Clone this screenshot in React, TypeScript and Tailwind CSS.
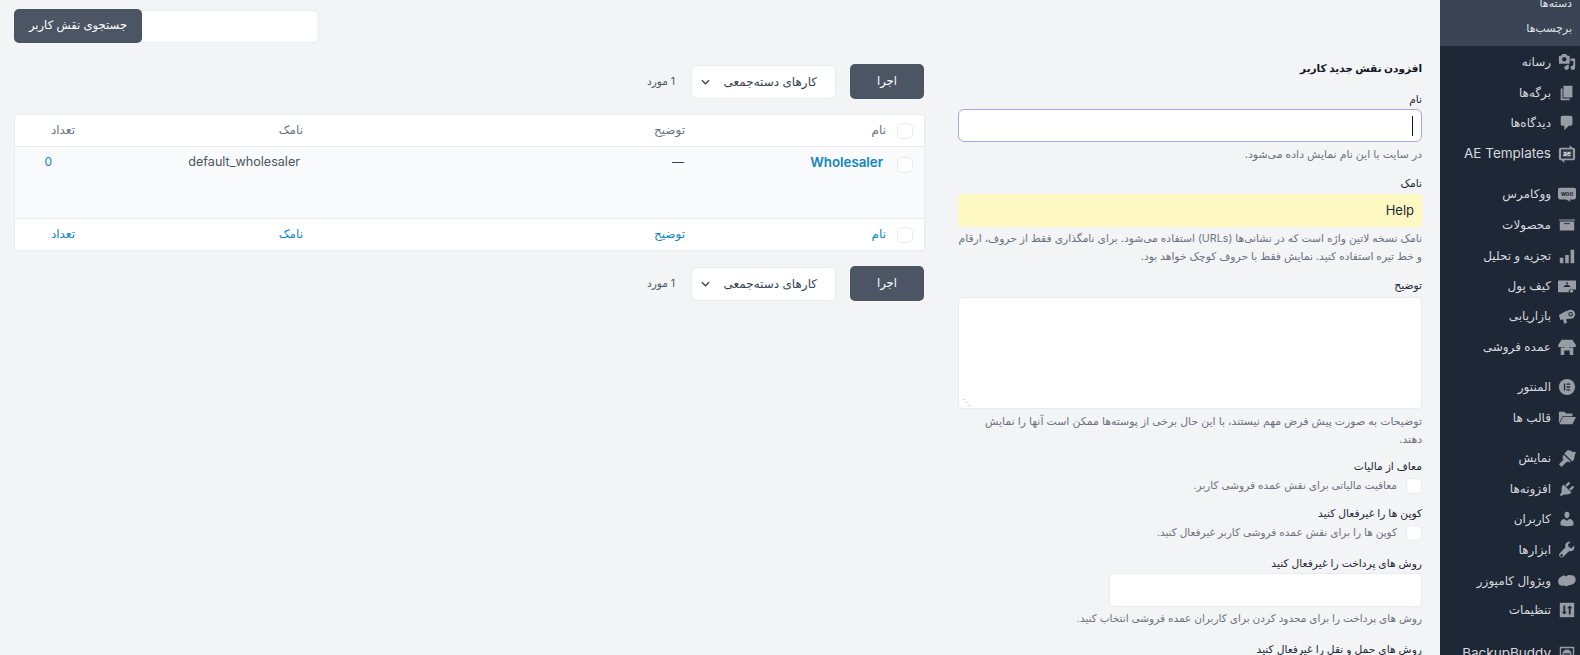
const bodyFont = "font-['Inter','DejaVu_Sans',sans-serif]"

function Ic({ children }: { children: React.ReactNode }) {
  return (
    <svg viewBox="0 0 20 20" className="w-[18px] h-[18px] shrink-0 fill-[#989ca4]">
      {children}
    </svg>
  )
}

const icons: Record<string, React.ReactNode> = {
  media: (
    <path
      fillRule="evenodd"
      d="M13 11V4c0-.55-.45-1-1-1h-1.670L9 1H5L3.670 3H2c-.55 0-1 .45-1 1v7c0 .55.45 1 1 1h10c.55 0 1-.45 1-1zM7 4.500c1.380 0 2.500 1.120 2.500 2.500S8.380 9.500 7 9.500 4.500 8.380 4.500 7 5.620 4.500 7 4.500zM14 6h5v10.500c0 1.380-1.120 2.500-2.500 2.500S14 17.880 14 16.500s1.120-2.500 2.500-2.500c.17 0 .34.020.5.050V9h-3V6zm-4 8.050V13h2v3.500c0 1.380-1.120 2.500-2.500 2.500S7 17.880 7 16.500 8.120 14 9.500 14c.17 0 .34.020.5.050z"
    />
  ),
  pages: <path d="M6 15V2h10v13H6zm-1 1h8v2H3V5h2v11z" />,
  comments: <path d="M5 2h9c1.100 0 2 .9 2 2v7c0 1.100-.9 2-2 2h-2l-5 5v-5H5c-1.100 0-2-.9-2-2V4c0-1.100.9-2 2-2z" />,
  ae: (
    <>
      <path
        fillRule="evenodd"
        d="M3 3h10V0l3 3h1a2 2 0 0 1 2 2v10a2 2 0 0 1-2 2H7v3l-3-3H3a2 2 0 0 1-2-2V5a2 2 0 0 1 2-2zM3.500 5v10h13V5z"
      />
      <rect x="5" y="6.500" width="10" height="7" rx="1" fill="#4c525c" />
      <text x="10" y="12.500" textAnchor="middle" fontSize="7" fontWeight="700" fill="#dfe2e6">ae</text>
    </>
  ),
  woo: (
    <>
      <path d="M2 3h16a2 2 0 0 1 2 2v9a2 2 0 0 1-2 2h-5l1 3-5-3H2a2 2 0 0 1-2-2V5a2 2 0 0 1 2-2z" />
      <text x="10" y="12" textAnchor="middle" fontSize="6.500" fontWeight="700" fill="#1e2736">woo</text>
    </>
  ),
  products: (
    <>
      <path d="M1 4h18v1H1zM2 6h16v10H2z" />
      <rect x="7" y="8" width="6" height="1" fill="#1e2736" />
    </>
  ),
  analytics: <path d="M2 12h4v6H2zM8 9h4v9H8zM14 3h4v15h-4z" />,
  wallet: (
    <>
      <path d="M0 4h20v10h-3a3 3 0 0 0-5 3H0z" />
      <path d="M9 6h2v2H9zM6 11l2-2h4l2 2z" fill="#1e2736" />
      <circle cx="15" cy="15.500" r="2" />
    </>
  ),
  marketing: (
    <>
      <path d="M1 9l9-5 3 9-4 .5 1 4-3 1-1.500-4.500-3 .5z" />
      <circle cx="14" cy="8" r="5" />
      <circle cx="14" cy="8" r="2.500" fill="#1e2736" />
      <circle cx="14" cy="8" r="1.300" />
    </>
  ),
  store: <path d="M4 2h12l4 6a2 2 0 0 1-3 2 3 3 0 0 1-4 0 3 3 0 0 1-6 0 3 3 0 0 1-4 0 2 2 0 0 1-3-2zM3 11h14v8h-4v-5H7v5H3z" />,
  elementor: (
    <>
      <circle cx="10" cy="10" r="9" />
      <path d="M6.500 6h1.500v8H6.500zM9.500 6h4v1.500h-4zM9.500 9.250h4v1.500h-4zM9.500 12.500h4V14h-4z" fill="#1e2736" />
    </>
  ),
  folder: <path d="M1 3h6l2 2h7v3H5L1 16zM5.500 9H20l-4 8H1.500z" />,
  brush: <path d="M20 3c-2 1-4 0-6-1l-3-1-4 4 9 9 2-3c0-3 1-5 2-8zM6 6l8 8-1 1-2-1-2 1-5 5-3-3 5-5-1-2z" />,
  plug: <path d="M13.110 4.360L9.870 7.600 8 5.730l3.240-3.240c.35-.34 1.050-.2 1.560.32.52.51.66 1.210.31 1.550zm-8 1.770l.91-1.120 9.010 9.010-1.190.84c-.71.71-2.630 1.160-3.820 1.160H6.140L4.900 17.260c-.59.59-1.540.59-2.120 0-.59-.58-.59-1.530 0-2.120l1.240-1.240v-3.880c0-1.130.4-3.190 1.090-3.890zm7.260 3.970l3.240-3.240c.34-.35 1.040-.21 1.550.31.52.51.66 1.210.31 1.550l-3.240 3.250z" />,
  user: <path d="M10 9.250c-2.270 0-2.730-3.440-2.730-3.440C7 4.020 7.820 2 9.970 2c2.160 0 2.980 2.020 2.710 3.810 0 0-.41 3.440-2.680 3.440zm0 2.570L12.720 10c2.390 0 4.520 2.330 4.520 4.530v2.490s-3.650 1.130-7.240 1.130c-3.650 0-7.240-1.130-7.240-1.130v-2.490c0-2.250 1.940-4.480 4.150-4.480z" />,
  wrench: <path fillRule="evenodd" d="M18 5l-3 3-3-1-1-3 3-3c-2-.5-4 0-5 1.500-1 1-1.200 3-.7 4.500L2 13.500c-1.200 1.200-1 3 .2 4s2.800 1 3.800 0l6.500-6.500c1.500.5 3.300.3 4.500-.8C18 9 18.500 7 18 5zM4 14.500a1.500 1.500 0 1 1-.01 0z" />,
  cloud: <path d="M4 5c2-2 4-1 5 0 2-2 5-2 8-1 3 1.500 3.500 6 1 8.500-1.500 1.500-4 2-5.500 2-1.500 1.500-4 1.500-5.500.5C4 16 1 15 .3 12-.5 9 1 6 4 5z" />,
  settings: (
    <>
      <path d="M2 2h16v16H2z" />
      <path d="M6 5h2v7h2l-3 3-3-3h2zM13 5l3 3h-2v7h-2V8h-2z" fill="#1e2736" />
    </>
  ),
  backup: (
    <>
      <path fillRule="evenodd" d="M2 2h16v16H2zM3.500 3.500v13h13v-13z" />
      <circle cx="10" cy="10" r="5" />
      <rect x="6.500" y="9.300" width="7" height="1.400" fill="#1e2736" />
    </>
  ),
}

const menu: { label: string; icon: string; h: string; latin?: boolean }[] = [
  { label: 'رسانه', icon: 'media', h: 'h-[31px]' },
  { label: 'برگه‌ها', icon: 'pages', h: 'h-[31px]' },
  { label: 'دیدگاه‌ها', icon: 'comments', h: 'h-[30px]' },
  { label: 'AE Templates', icon: 'ae', h: 'h-[31px] mb-[10px]', latin: true },
  { label: 'ووکامرس', icon: 'woo', h: 'h-[30px]' },
  { label: 'محصولات', icon: 'products', h: 'h-[31px]' },
  { label: 'تجزیه و تحلیل', icon: 'analytics', h: 'h-[31px]' },
  { label: 'کیف پول', icon: 'wallet', h: 'h-[30px]' },
  { label: 'بازاریابی', icon: 'marketing', h: 'h-[30px]' },
  { label: 'عمده فروشی', icon: 'store', h: 'h-[31px] mb-[9px]' },
  { label: 'المنتور', icon: 'elementor', h: 'h-[31px]' },
  { label: 'قالب ها', icon: 'folder', h: 'h-[31px] mb-[9px]' },
  { label: 'نمایش', icon: 'brush', h: 'h-[31px]' },
  { label: 'افزونه‌ها', icon: 'plug', h: 'h-[31px]' },
  { label: 'کاربران', icon: 'user', h: 'h-[30px]' },
  { label: 'ابزارها', icon: 'wrench', h: 'h-[32px]' },
  { label: 'ویژوال کامپوزر', icon: 'cloud', h: 'h-[29px]' },
  { label: 'تنظیمات', icon: 'settings', h: 'h-[30px] mb-[13px]' },
  { label: 'BackupBuddy', icon: 'backup', h: 'h-[31px]', latin: true },
]

function Sidebar() {
  return (
    <aside className="w-[140px] h-[655px] overflow-hidden shrink-0 bg-[#1e2736] text-[#d6d9de]">
      <div className="h-[46px] bg-[#3a4454] flex flex-col items-start pr-[8px] text-[11px] text-[#dfe2e6]">
        <div className="h-[26px] -mt-[15px] flex items-end">دسته‌ها</div>
        <div className="h-[26px] mt-[4px] flex items-center">برچسب‌ها</div>
      </div>
      <nav className="flex flex-col">
        {menu.map((m) => (
          <div key={m.label} className={`${m.h} flex items-center pr-[4px] gap-[7px]`}>
            <Ic>{icons[m.icon]}</Ic>
            <span className={`whitespace-nowrap ${m.latin ? 'text-[13.5px]' : 'text-[12px]'}`}>{m.label}</span>
          </div>
        ))}
      </nav>
    </aside>
  )
}

function Check() {
  return <span className="block w-4 h-4 rounded-[5px] bg-white border border-[#e9ebef] shrink-0" />
}

function Field({ label, hint, children, gap = 'mb-[3px]', hintGap = 'mt-[3px]', hintSize = 'text-[10.9px]' }: { label: string; hint?: React.ReactNode; children: React.ReactNode; gap?: string; hintGap?: string; hintSize?: string }) {
  return (
    <div>
      <div className={`text-[10.7px] leading-[16px] text-[#1f2937] ${gap}`}>{label}</div>
      {children}
      {hint && <p className={`${hintSize} leading-[18px] text-[#6b7280] whitespace-nowrap ${hintGap}`}>{hint}</p>}
    </div>
  )
}

function AddForm() {
  return (
    <section className="w-[464px] shrink-0 pt-[61px]">
      <h2 className="text-[10.5px] leading-[16px] font-bold text-[#111827] mb-[15px]">افزودن نقش جدید کاربر</h2>
      <Field label="نام" gap="mb-[1px]" hint="در سایت با این نام نمایش داده می‌شود.">
        <div className="h-[33px] rounded-[6px] bg-white border border-[#a5a6e0] flex items-center pr-[8px]">
          <span className="block w-px h-[20px] bg-[#111827]" />
        </div>
      </Field>
      <div className="mt-[13px]">
        <Field
          label="نامک"
          gap="mb-[2px]"
          hintSize="text-[10.7px]"
          hint={
            <>
              نامک نسخه لاتین واژه است که در نشانی‌ها (URLs) استفاده می‌شود. برای نامگذاری فقط از حروف، ارقام
              <br />
              و خط تیره استفاده کنید. نمایش فقط با حروف کوچک خواهد بود.
            </>
          }
        >
          <div className="h-[33px] rounded-[4px] bg-[#fef9c3] flex items-center pr-[8px] text-[13px] text-[#1f2937]">Help</div>
        </Field>
      </div>
      <div className="mt-[12px]">
        <Field
          label="توضیح"
          hint={
            <>
              توضیحات به صورت پیش فرض مهم نیستند، با این حال برخی از پوسته‌ها ممکن است آنها را نمایش
              <br />
              دهند.
            </>
          }
        >
          <div className="h-[112px] rounded-[4px] bg-white border border-[#e9ebef] relative">
            <span className="absolute left-[3px] bottom-[2px] text-[8px] leading-none text-[#9ca3af]">⋰</span>
          </div>
        </Field>
      </div>
      <div className="mt-[11px]">
        <div className="text-[10.7px] leading-[16px] text-[#1f2937] mb-[3px]">معاف از مالیات</div>
        <label className="flex items-center gap-[9px] text-[10.5px] text-[#6b7280]">
          <Check />
          معافیت مالیاتی برای نقش عمده فروشی کاربر.
        </label>
      </div>
      <div className="mt-[12px]">
        <div className="text-[10.7px] leading-[16px] text-[#1f2937] mb-[3px]">کوپن ها را غیرفعال کنید</div>
        <label className="flex items-center gap-[9px] text-[10.5px] text-[#6b7280]">
          <Check />
          کوپن ها را برای نقش عمده فروشی کاربر غیرفعال کنید.
        </label>
      </div>
      <div className="mt-[15px]">
        <Field label="روش های پرداخت را غیرفعال کنید" gap="mb-[1px]" hintSize="text-[10.5px]" hint="روش های پرداخت را برای محدود کردن برای کاربران عمده فروشی انتخاب کنید.">
          <div className="w-[313px] h-[34px] rounded-[4px] bg-white border border-[#e9ebef]" />
        </Field>
      </div>
      <div className="mt-[14px] text-[10.7px] leading-[16px] text-[#1f2937]">روش های حمل و نقل را غیرفعال کنید</div>
    </section>
  )
}

function Bulk() {
  return (
    <div className="flex items-center h-[35px]">
      <button className="w-[74px] h-[35px] rounded-[5px] bg-[#4b5563] text-white text-[11.5px]">اجرا</button>
      <div className="w-[145px] h-[34px] mr-[14px] rounded-[5px] bg-white border border-[#e9ebef] flex items-center justify-between pr-[18px] pl-[9px] text-[12px] text-[#374151]">
        <span>کارهای دسته‌جمعی</span>
        <svg viewBox="0 0 10 6" className="w-[9px] h-[6px] fill-none stroke-[#374151] stroke-[1.4]">
          <path d="M1 1l4 4 4-4" />
        </svg>
      </div>
      <span className="mr-[16px] text-[10.5px] text-[#4b5563]">1 مورد</span>
    </div>
  )
}

function Row({ link, className }: { link?: boolean; className: string }) {
  const color = link ? 'text-[#0f86c4]' : 'text-[#6b7280]'
  return (
    <div className={`flex h-[32px] ${className} text-[12px]`}>
      <div className="w-[38px] shrink-0 pr-[11px] flex items-center"><Check /></div>
      <div className={`w-[201px] pt-[6px] ${color}`}>نام</div>
      <div className={`w-[382px] pt-[6px] ${color}`}>توضیح</div>
      <div className={`w-[228px] pt-[6px] ${color}`}>نامک</div>
      <div className={`flex-1 pt-[6px] ${color}`}>تعداد</div>
    </div>
  )
}

function RolesTable() {
  return (
    <section className="flex-1 min-w-0 pt-[9px] pr-[34px] pl-[14px]">
      <div className="flex justify-end">
        <div className="w-[305px] h-[34px] flex">
          <div className="flex-1 h-[33px] mt-px rounded-r-[6px] bg-white border border-[#e9ebef]" />
          <button className="w-[128px] h-[34px] rounded-[5px] bg-[#4b5563] text-white text-[11.6px] -mr-px">جستجوی نقش کاربر</button>
        </div>
      </div>
      <div className="mt-[21px]"><Bulk /></div>
      <div className="mt-[15px] rounded-[3px] border border-[#e8eaee] bg-white overflow-hidden -mr-px">
        <Row className="border-b border-[#e8eaee]" />
        <div className="flex h-[71px] bg-[#f9fafb] text-[12px]">
          <div className="w-[38px] shrink-0 pr-[11px] pt-[10px]"><Check /></div>
          <div className="w-[201px] pt-[6px] pr-[3px] font-semibold text-[#0f86c4] text-[13.3px]">Wholesaler</div>
          <div className="w-[382px] pt-[6px] pr-[1px] text-[#374151]">—</div>
          <div className="w-[228px] pt-[6px] pr-[3px] text-[#4b5563] text-[12.6px]">default_wholesaler</div>
          <div className="flex-1 pt-[6px] pr-[23px] text-[#0f86c4]">0</div>
        </div>
        <Row link className="border-t border-[#e8eaee]" />
      </div>
      <div className="mt-[15px]"><Bulk /></div>
    </section>
  )
}

export default function App() {
  return (
    <div dir="rtl" className={`${bodyFont} w-[1580px] h-[655px] overflow-hidden flex bg-[#f3f4f6]`}>
      <Sidebar />
      <main className="flex-1 flex pr-[18px] overflow-hidden">
        <AddForm />
        <RolesTable />
      </main>
    </div>
  )
}
